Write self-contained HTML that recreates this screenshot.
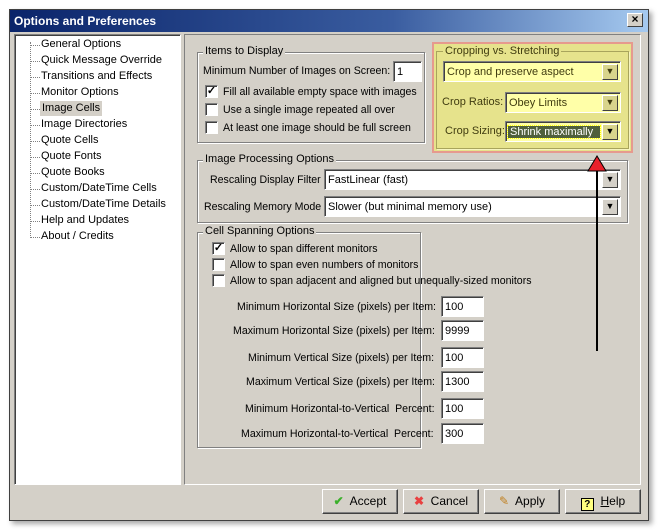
<!DOCTYPE html>
<html><head><meta charset="utf-8"><style>
*{box-sizing:border-box}
body{margin:0;width:659px;height:531px;background:#fff;font:10.6px "Liberation Sans",sans-serif;color:#000;position:relative;overflow:hidden}
.a{position:absolute}
.win{left:9px;top:9px;width:640px;height:512px;background:#d4d0c8;border:1px solid #404040;box-shadow:3px 3px 5px rgba(0,0,0,.35)}
.title{left:10px;top:10px;width:638px;height:22px;background:linear-gradient(90deg,#0a246a,#3a5da0 60%,#a6caf0);color:#fff;font-weight:bold;font-size:12px;padding:4px 0 0 4px}
.close{left:627px;top:13px;width:16px;height:14px;background:#d4d0c8;border:1px solid;border-color:#fff #404040 #404040 #fff;font-size:12px;line-height:11px;text-align:center;font-weight:bold}
.tree{left:14px;top:34px;width:167px;height:451px;background:#fff;border:1px solid;border-color:#808080 #fff #fff #808080;box-shadow:inset 1px 1px 0 #404040}
.ti{left:41px;height:15px;line-height:15px;font-size:11px}
.dl{left:30px;width:10px;border-top:1px dotted #808080}
.panel{left:184px;top:34px;width:457px;height:451px;border:1px solid;border-color:#808080 #fff #fff #808080}
.grp{border:1px solid #808080;box-shadow:1px 1px 0 #fff,inset 1px 1px 0 #fff}
.lg{background:#d4d0c8;padding:0 2px;line-height:13px;font-size:11px}
.cb{width:13px;height:13px;background:#fff;border:1px solid;border-color:#808080 #fff #fff #808080;box-shadow:inset 1px 1px 0 #404040;font-size:11px;line-height:10px;text-align:center;font-weight:bold}
.in{height:21px;background:#fff;border:1px solid;border-color:#808080 #fff #fff #808080;box-shadow:inset 1px 1px 0 #404040;padding:4px 0 0 3px;font-size:11px}
.dd{position:absolute;right:2px;top:2px;width:16px;height:16px;background:#d4d0c8;border:1px solid;border-color:#fff #404040 #404040 #fff;font-size:9px;text-align:center;line-height:13px}
.btn{top:489px;width:76px;height:25px;border:1px solid;border-color:#fff #404040 #404040 #fff;box-shadow:inset -1px -1px 0 #808080;text-align:center;line-height:23px;font-size:12px}
</style></head><body>
<div class="a win"></div>
<div class="a title">Options and Preferences</div>
<div class="a close">×</div>
<div class="a tree"></div>
<div class="a" style="left:30px;top:42px;height:196px;border-left:1px dotted #808080"></div>
<div class="a dl" style="top:45px"></div><div class="a ti" style="top:37px">General Options</div>
<div class="a dl" style="top:61px"></div><div class="a ti" style="top:53px">Quick Message Override</div>
<div class="a dl" style="top:77px"></div><div class="a ti" style="top:69px">Transitions and Effects</div>
<div class="a dl" style="top:93px"></div><div class="a ti" style="top:85px">Monitor Options</div>
<div class="a dl" style="top:109px"></div><div class="a ti" style="top:101px;left:40px;background:#d4d0c8;padding:0 2px">Image Cells</div>
<div class="a dl" style="top:125px"></div><div class="a ti" style="top:117px">Image Directories</div>
<div class="a dl" style="top:141px"></div><div class="a ti" style="top:133px">Quote Cells</div>
<div class="a dl" style="top:157px"></div><div class="a ti" style="top:149px">Quote Fonts</div>
<div class="a dl" style="top:173px"></div><div class="a ti" style="top:165px">Quote Books</div>
<div class="a dl" style="top:189px"></div><div class="a ti" style="top:181px">Custom/DateTime Cells</div>
<div class="a dl" style="top:205px"></div><div class="a ti" style="top:197px">Custom/DateTime Details</div>
<div class="a dl" style="top:221px"></div><div class="a ti" style="top:213px">Help and Updates</div>
<div class="a dl" style="top:237px"></div><div class="a ti" style="top:229px">About / Credits</div>
<div class="a panel"></div>

<div class="a grp" style="left:197px;top:52px;width:228px;height:91px"></div>
<div class="a lg" style="left:203px;top:45px">Items to Display</div>
<div class="a" style="left:203px;top:65px">Minimum Number of Images on Screen:</div>
<div class="a in" style="left:393px;top:61px;width:29px">1</div>
<div class="a cb" style="left:205px;top:85px">✓</div><div class="a" style="left:223px;top:86px">Fill all available empty space with images</div>
<div class="a cb" style="left:205px;top:103px"></div><div class="a" style="left:223px;top:104px">Use a single image repeated all over</div>
<div class="a cb" style="left:205px;top:121px"></div><div class="a" style="left:223px;top:122px">At least one image should be full screen</div>

<div class="a" style="left:432px;top:42px;width:201px;height:111px;border:2px solid #e69a8e;background:#e6e38c"></div>
<div class="a" style="left:436px;top:51px;width:193px;height:98px;border:1px solid #a8a45c;box-shadow:1px 1px 0 #f6f4c0"></div>
<div class="a" style="left:443px;top:45px;background:#e6e38c;padding:0 2px;color:#403c10;font-size:11px">Cropping vs. Stretching</div>
<div class="a in" style="left:443px;top:61px;width:178px;background:#ffffa8;color:#403c10">Crop and preserve aspect<div class="dd" style="background:#d8d48c">▼</div></div>
<div class="a" style="left:442px;top:96px;color:#403c10;font-size:11px">Crop Ratios:</div>
<div class="a in" style="left:505px;top:92px;width:116px;background:#ffffa8;color:#403c10">Obey Limits<div class="dd" style="background:#d8d48c">▼</div></div>
<div class="a" style="left:445px;top:125px;color:#403c10;font-size:11px">Crop Sizing:</div>
<div class="a in" style="left:505px;top:121px;width:116px;background:#ffffa8;color:#fff"><span style="background:#4f5f3c;outline:1px dotted #ff0;display:inline-block;width:92px;margin-left:-1px;padding-left:2px">Shrink maximally</span><div class="dd" style="background:#d8d48c;color:#000">▼</div></div>

<div class="a grp" style="left:197px;top:160px;width:431px;height:63px"></div>
<div class="a lg" style="left:203px;top:153px">Image Processing Options</div>
<div class="a" style="left:210px;top:174px">Rescaling Display Filter</div>
<div class="a in" style="left:324px;top:169px;width:297px">FastLinear (fast)<div class="dd">▼</div></div>
<div class="a" style="left:204px;top:201px">Rescaling Memory Mode</div>
<div class="a in" style="left:324px;top:196px;width:297px">Slower (but minimal memory use)<div class="dd">▼</div></div>

<div class="a grp" style="left:197px;top:232px;width:224px;height:216px"></div>
<div class="a lg" style="left:203px;top:225px">Cell Spanning Options</div>
<div class="a cb" style="left:212px;top:242px">✓</div><div class="a" style="left:230px;top:243px">Allow to span different monitors</div>
<div class="a cb" style="left:212px;top:258px"></div><div class="a" style="left:230px;top:259px">Allow to span even numbers of monitors</div>
<div class="a cb" style="left:212px;top:274px"></div><div class="a" style="left:230px;top:275px">Allow to span adjacent and aligned but unequally-sized monitors</div>
<div class="a" style="left:237px;top:301px">Minimum Horizontal Size (pixels) per Item:</div><div class="a in" style="left:441px;top:296px;width:43px">100</div>
<div class="a" style="left:233px;top:325px">Maximum Horizontal Size (pixels) per Item:</div><div class="a in" style="left:441px;top:320px;width:43px">9999</div>
<div class="a" style="left:248px;top:352px">Minimum Vertical Size (pixels) per Item:</div><div class="a in" style="left:441px;top:347px;width:43px">100</div>
<div class="a" style="left:246px;top:376px">Maximum Vertical Size (pixels) per Item:</div><div class="a in" style="left:441px;top:371px;width:43px">1300</div>
<div class="a" style="left:245px;top:403px">Minimum Horizontal-to-Vertical&nbsp; Percent:</div><div class="a in" style="left:441px;top:398px;width:43px">100</div>
<div class="a" style="left:241px;top:428px">Maximum Horizontal-to-Vertical&nbsp; Percent:</div><div class="a in" style="left:441px;top:423px;width:43px">300</div>

<svg class="a" style="left:585px;top:155px" width="24" height="200"><polygon points="12,1 3,16 21,16" fill="#e8202a" stroke="#000" stroke-width="1"/><line x1="12" y1="16" x2="12" y2="196" stroke="#000" stroke-width="2"/></svg>

<div class="a btn" style="left:322px"><span style="color:#3cb02c;font-weight:bold">✔</span>&nbsp; Accept</div>
<div class="a btn" style="left:403px"><span style="color:#e84040;font-weight:bold">✖</span>&nbsp; Cancel</div>
<div class="a btn" style="left:484px"><span style="color:#c08020">✎</span>&nbsp; Apply</div>
<div class="a btn" style="left:565px"><span style="display:inline-block;width:13px;height:13px;border:1px solid #000;background:#ffff80;font-weight:bold;line-height:11px;font-size:10px;vertical-align:-2px">?</span>&nbsp; <u>H</u>elp</div>
</body></html>
